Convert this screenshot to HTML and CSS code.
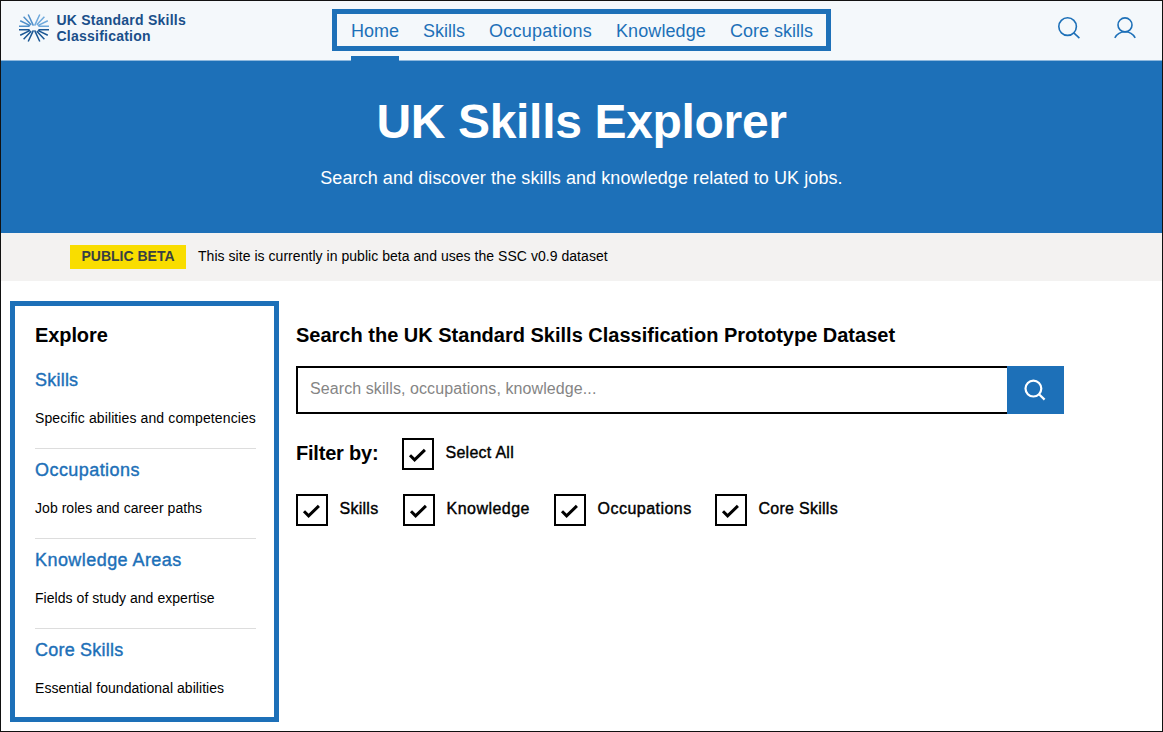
FILE: index.html
```html
<!DOCTYPE html>
<html lang="en">
<head>
<meta charset="utf-8">
<title>UK Skills Explorer</title>
<link rel="stylesheet" href="styles.css">
</head>
<body>
<div class="page">
  <header class="header">
    <a class="brand">
      <svg class="brand-mark" viewBox="0 0 30 28" fill="none" stroke-width="1.5">
        <g stroke="#4f8fca"><path d="M0 12.3H10.5M1.2 6.8 11.2 11.6M4.6 2.8 12.2 10.8M9.2 .5 14.4 11.6"/></g>
        <g stroke="#6fa9dc"><path d="M19.5 12.3H30M28.8 6.8 18.8 11.6M25.4 2.8 17.8 10.8M20.8 .5 15.6 11.6"/></g>
        <g stroke="#1a5694"><path d="M0 15.7H10.5M1.2 21.2 11.2 16.4M4.6 25.2 12.2 17.2M9.2 27.5 14.4 16.4M19.5 15.7H30M28.8 21.2 18.8 16.4M25.4 25.2 17.8 17.2M20.8 27.5 15.6 16.4"/></g>
      </svg>
      <span class="brand-name"><span class="brand-top">UK Standard Skills</span><span class="brand-bottom">Classification</span></span>
    </a>
    <nav class="nav">
      <a class="nav-link active">Home</a><a class="nav-link">Skills</a><a class="nav-link nav-wide">Occupations</a><a class="nav-link nav-mid">Knowledge</a><a class="nav-link">Core skills</a>
    </nav>
    <div class="tools">
      <svg class="tool" viewBox="0 0 24 24"><circle cx="10.6" cy="10.6" r="8.8"/><path d="m16.8 16.8 5.6 5.4"/></svg>
      <svg class="tool" viewBox="0 0 24 24"><circle cx="12" cy="8.9" r="7"/><path d="M1.8 21.8C4 17.8 7.4 15.7 12 15.7s8 2.1 10.2 6.1"/></svg>
    </div>
  </header>
  <section class="hero">
    <h1 class="hero-title">UK Skills Explorer</h1>
    <p class="hero-text">Search and discover the skills and knowledge related to UK jobs.</p>
  </section>
  <div class="beta">
    <strong class="tag">PUBLIC BETA</strong>
    <span class="beta-text">This site is currently in public beta and uses the SSC v0.9 dataset</span>
  </div>
  <div class="content">
    <aside class="explore">
      <h2 class="heading explore-heading">Explore</h2>
      <div class="topic"><a class="topic-link">Skills</a><p class="topic-text topic-text-long">Specific abilities and competencies</p></div>
      <div class="topic"><a class="topic-link wide">Occupations</a><p class="topic-text">Job roles and career paths</p></div>
      <div class="topic"><a class="topic-link wide">Knowledge Areas</a><p class="topic-text">Fields of study and expertise</p></div>
      <div class="topic"><a class="topic-link">Core Skills</a><p class="topic-text">Essential foundational abilities</p></div>
    </aside>
    <main class="main">
      <h2 class="heading">Search the UK Standard Skills Classification Prototype Dataset</h2>
      <div class="search">
        <div class="search-field">Search skills, occupations, knowledge...</div>
        <div class="search-button"><svg class="search-icon" viewBox="0 0 24 24"><circle cx="10.4" cy="10.6" r="7.9"/><path d="m16 16.2 5.6 5.4"/></svg></div>
      </div>
      <div class="filters">
        <h2 class="heading filter-heading">Filter by:</h2>
        <div class="check"><span class="box"><svg viewBox="0 0 28 28"><path d="m6 15.3 4.6 4.6L20.9 9.9"/></svg></span><span class="check-label">Select All</span></div>
      </div>
      <div class="options">
        <div class="check option-skills"><span class="box"><svg viewBox="0 0 28 28"><path d="m6 15.3 4.6 4.6L20.9 9.9"/></svg></span><span class="check-label">Skills</span></div>
        <div class="check option-knowledge"><span class="box"><svg viewBox="0 0 28 28"><path d="m6 15.3 4.6 4.6L20.9 9.9"/></svg></span><span class="check-label wide">Knowledge</span></div>
        <div class="check option-occupations"><span class="box"><svg viewBox="0 0 28 28"><path d="m6 15.3 4.6 4.6L20.9 9.9"/></svg></span><span class="check-label wide">Occupations</span></div>
        <div class="check"><span class="box"><svg viewBox="0 0 28 28"><path d="m6 15.3 4.6 4.6L20.9 9.9"/></svg></span><span class="check-label">Core Skills</span></div>
      </div>
    </main>
  </div>
</div>
</body>
</html>
```

FILE: styles.css
```css
* { box-sizing: border-box; }
body, h1, h2, p { margin: 0; }
body { font-family: "Liberation Sans", Arial, sans-serif; color: #000; background: #fff; }
svg { display: block; }
.page { height: 732px; border: 1px solid #111; overflow: hidden; }

.header { height: 60px; display: grid; grid-template-columns: 331px 499px 1fr; align-items: start; background: #f4f8fb; border-bottom: 1px solid #8eb8dd; }
.brand { display: flex; gap: 7.5px; padding: 11px 0 0 18px; color: #1a4f8a; }
.brand-mark { width: 30px; height: 28px; margin-top: 2px; }
.brand-name { display: grid; font-size: 14px; font-weight: 700; line-height: 16px; letter-spacing: .23px; white-space: nowrap; align-content: start; }
.nav { height: 42px; margin-top: 8px; border: 5px solid #1d70b8; display: flex; gap: 24px; padding-left: 14px; white-space: nowrap; }
.nav-link { position: relative; font-size: 18px; line-height: 34px; color: #1d70b8; }
.nav-wide { letter-spacing: .26px; }
.nav-mid { letter-spacing: .1px; }
.active::after { content: ""; position: absolute; left: 0; right: 0; top: 42px; height: 5px; background: #1d70b8; }
.tools { display: flex; justify-content: flex-end; gap: 32px; padding: 15px 25px 0 0; }
.tool { width: 24px; height: 24px; fill: none; stroke: #1d70b8; stroke-width: 1.6; }

.hero { height: 172px; padding-top: 33px; background: #1d70b8; color: #fff; text-align: center; }
.hero-title { font-size: 48px; line-height: 56px; letter-spacing: -.33px; }
.hero-text { margin-top: 15px; font-size: 18px; line-height: 26px; letter-spacing: .08px; }

.beta { height: 48px; padding-left: 69px; display: flex; gap: 12px; align-items: center; background: #f3f2f1; }
.tag { width: 116px; height: 24px; background: #f9dd00; color: #383f43; font-size: 14px; line-height: 23px; text-align: center; }
.beta-text { padding-bottom: 2px; font-size: 14px; line-height: 20px; letter-spacing: .04px; }

.content { display: flex; gap: 17px; padding: 20px 0 0 9px; }
.explore { width: 269px; height: 421px; border: 5px solid #1d70b8; padding: 14px 18px 0 20px; }
.heading { font-size: 20px; line-height: 30px; white-space: nowrap; }
.explore-heading { margin-bottom: 9px; letter-spacing: -.1px; }
.topic { height: 90px; padding-top: 8px; border-bottom: 1px solid #ddd; }
.topic:last-child { border: 0; }
.topic-link { display: block; font-size: 18px; line-height: 26px; letter-spacing: .22px; color: #1d70b8; -webkit-text-stroke: .4px #1d70b8; }
.topic-link.wide { letter-spacing: .44px; }
.topic-text { margin-top: 14px; font-size: 14px; line-height: 22px; letter-spacing: .05px; white-space: nowrap; }
.topic-text-long { letter-spacing: .11px; }

.main { padding-top: 19px; }
.search { display: flex; width: 768px; height: 48px; margin-top: 16px; }
.search-field { flex: 1; border: 2px solid #000; border-right: 0; padding-left: 12px; font-size: 16px; line-height: 42px; letter-spacing: .09px; color: #858585; }
.search-button { width: 57px; background: #1d70b8; padding: 12px 0 0 16px; }
.search-icon { width: 24px; height: 24px; fill: none; stroke: #fff; stroke-width: 2.2; }
.filters { display: flex; gap: 24px; margin-top: 24px; }
.filter-heading { width: 82px; letter-spacing: -.2px; }
.options { display: flex; gap: 24px; margin-top: 24px; }
.option-skills { width: 83px; }
.option-knowledge { width: 127px; }
.option-occupations { width: 137px; }
.check { display: flex; gap: 11.5px; }
.box { flex: none; width: 32px; height: 32px; border: 2px solid #000; }
.box path { fill: none; stroke: #000; stroke-width: 3; }
.check-label { font-size: 16px; line-height: 30px; letter-spacing: .27px; white-space: nowrap; -webkit-text-stroke: .4px #000; }
.check-label.wide { letter-spacing: .48px; }
```
